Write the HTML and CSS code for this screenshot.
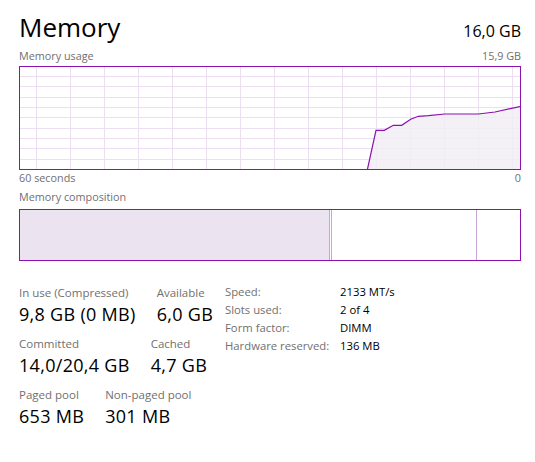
FILE: index.html
```html
<!DOCTYPE html>
<html lang="en">
<head>
  <meta charset="UTF-8">
  <title>Memory</title>
  <link rel="stylesheet" href="styles.css">
</head>
<body>
  <main class="panel">
    <header class="head">
      <h1>Memory</h1>
      <span class="total">16,0 GB</span>
    </header>

    <div class="caption usage-caption">
      <span>Memory usage</span>
      <span>15,9 GB</span>
    </div>

    <div class="chart">
      <svg width="502" height="104" viewBox="0 0 502 104">
        <g stroke="#ecdff1" stroke-width="1">
          <line x1="0" y1="10.5" x2="502" y2="10.5"/>
          <line x1="0" y1="20.5" x2="502" y2="20.5"/>
          <line x1="0" y1="31.5" x2="502" y2="31.5"/>
          <line x1="0" y1="41.5" x2="502" y2="41.5"/>
          <line x1="0" y1="51.5" x2="502" y2="51.5"/>
          <line x1="0" y1="62.5" x2="502" y2="62.5"/>
          <line x1="0" y1="72.5" x2="502" y2="72.5"/>
          <line x1="0" y1="82.5" x2="502" y2="82.5"/>
          <line x1="0" y1="93.5" x2="502" y2="93.5"/>
          <line x1="17.5" y1="0" x2="17.5" y2="104"/>
          <line x1="51.5" y1="0" x2="51.5" y2="104"/>
          <line x1="85.5" y1="0" x2="85.5" y2="104"/>
          <line x1="119.5" y1="0" x2="119.5" y2="104"/>
          <line x1="153.5" y1="0" x2="153.5" y2="104"/>
          <line x1="187.5" y1="0" x2="187.5" y2="104"/>
          <line x1="221.5" y1="0" x2="221.5" y2="104"/>
          <line x1="255.5" y1="0" x2="255.5" y2="104"/>
          <line x1="289.5" y1="0" x2="289.5" y2="104"/>
          <line x1="323.5" y1="0" x2="323.5" y2="104"/>
          <line x1="357.5" y1="0" x2="357.5" y2="104"/>
          <line x1="391.5" y1="0" x2="391.5" y2="104"/>
          <line x1="425.5" y1="0" x2="425.5" y2="104"/>
          <line x1="459.5" y1="0" x2="459.5" y2="104"/>
          <line x1="493.5" y1="0" x2="493.5" y2="104"/>
        </g>
        <path d="M348.3 104 L357 64.3 L365.3 64.3 L374.3 59.3 L382.7 59.3 L391.7 53.3 L399.3 50.3 L409.3 49.7 L426 48 L459.3 48 L476 46 L502 40.3 L502 104 Z" fill="#f1eef3" fill-opacity="0.85"/>
        <polyline points="348.3,104 357,64.3 365.3,64.3 374.3,59.3 382.7,59.3 391.7,53.3 399.3,50.3 409.3,49.7 426,48 459.3,48 476,46 502,40.3" fill="none" stroke="#8b12ae" stroke-width="1.2"/>
        <rect x="0.5" y="0.5" width="501" height="103" fill="none" stroke="#8b12ae" stroke-width="1"/>
      </svg>
    </div>

    <div class="caption axis-caption">
      <span>60 seconds</span>
      <span>0</span>
    </div>

    <div class="caption comp-caption">
      <span>Memory composition</span>
    </div>

    <div class="composition">
      <div class="seg in-use"></div>
      <div class="seg modified"></div>
      <div class="seg standby"></div>
      <div class="seg free"></div>
    </div>

    <section class="stats">
      <div class="figures">
        <div class="row">
          <div class="stat">
            <div class="label">In use (Compressed)</div>
            <div class="value">9,8 GB (0 MB)</div>
          </div>
          <div class="stat">
            <div class="label">Available</div>
            <div class="value">6,0 GB</div>
          </div>
        </div>
        <div class="row">
          <div class="stat">
            <div class="label">Committed</div>
            <div class="value">14,0/20,4 GB</div>
          </div>
          <div class="stat">
            <div class="label">Cached</div>
            <div class="value">4,7 GB</div>
          </div>
        </div>
        <div class="row">
          <div class="stat">
            <div class="label">Paged pool</div>
            <div class="value">653 MB</div>
          </div>
          <div class="stat">
            <div class="label">Non-paged pool</div>
            <div class="value">301 MB</div>
          </div>
        </div>
      </div>

      <dl class="specs">
        <dt>Speed:</dt><dd>2133 MT/s</dd>
        <dt>Slots used:</dt><dd>2 of 4</dd>
        <dt>Form factor:</dt><dd>DIMM</dd>
        <dt>Hardware reserved:</dt><dd>136 MB</dd>
      </dl>
    </section>
  </main>
</body>
</html>
```

FILE: styles.css
```css
body {
  margin: 0;
  background: #fff;
  font-family: "Open Sans", "Noto Sans", sans-serif;
  color: #000;
}

.panel {
  width: 502px;
  padding: 10px 0 0 19px;
}

.head {
  display: flex;
  justify-content: space-between;
  align-items: baseline;
  height: 34px;
}

.head h1 {
  margin: 0;
  font-size: 26px;
  font-weight: 400;
  line-height: 34px;
}

.total {
  font-size: 16px;
  line-height: 34px;
}

.caption {
  display: flex;
  justify-content: space-between;
  font-size: 10.8px;
  line-height: 14px;
  color: #707070;
}

.usage-caption {
  margin-top: 5px;
}

.chart {
  margin-top: 3px;
  height: 104px;
}

.chart svg {
  display: block;
}

.axis-caption {
  margin-top: 1px;
}

.comp-caption {
  margin-top: 5px;
}

.composition {
  display: flex;
  margin-top: 5px;
  height: 50px;
  border: 1px solid #8b12ae;
}

.seg {
  height: 100%;
}

.in-use {
  width: 309px;
  background: #ece3f1;
}

.modified {
  width: 1px;
  border-left: 1px solid #c9a5d6;
  border-right: 1px solid #c9a5d6;
}

.standby {
  width: 144px;
  border-right: 1px solid #c9a5d6;
}

.free {
  flex: 1;
}

.stats {
  display: flex;
  margin-top: 25px;
}

.figures {
  width: 206px;
  display: flex;
  flex-direction: column;
  gap: 8px;
}

.row {
  display: flex;
  gap: 21px;
}

.label {
  font-size: 11.5px;
  line-height: 13px;
  color: #707070;
}

.value {
  font-size: 18px;
  line-height: 30px;
  letter-spacing: 0.3px;
}

.specs {
  margin: -3px 0 0;
  display: grid;
  grid-template-columns: 115px auto;
  grid-auto-rows: 18px;
  align-content: start;
  font-size: 11.3px;
  line-height: 18px;
}

.specs dt {
  color: #707070;
}

.specs dd {
  margin: 0;
  color: #000;
}
```
